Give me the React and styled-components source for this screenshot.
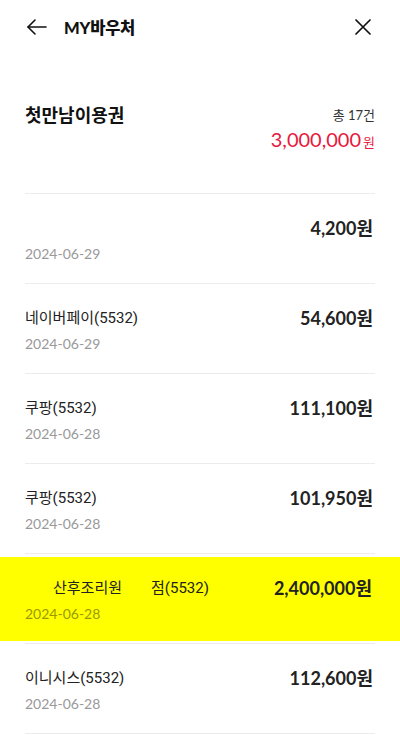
import React from "react";
import styled, { createGlobalStyle } from "styled-components";

const Global = createGlobalStyle`
  html, body { margin: 0; padding: 0; background: #fff; }
  body { font-family: Lato, "Noto Sans CJK KR", sans-serif; color: #222; }
  * { box-sizing: border-box; }
`;

const Page = styled.div`
  width: 400px;
  min-height: 751px;
  background: #fff;
  display: flex;
  flex-direction: column;
`;

const Header = styled.header`
  height: 54px;
  padding: 0 26px 0 26px;
  display: flex;
  align-items: center;
  gap: 16px;
`;

const IconButton = styled.button`
  border: 0;
  background: none;
  padding: 0;
  display: flex;
  align-items: center;
  justify-content: center;
  width: 22px;
  height: 22px;
  color: #111;
  margin-left: ${(p) => (p.$push ? "auto" : "0")};
`;

const Title = styled.h1`
  margin: 0;
  font-family: Lato, "Noto Sans CJK KR", sans-serif;
  font-size: 16.5px;
  font-weight: 900;
  color: #111;
  letter-spacing: -0.2px;
`;

const Summary = styled.section`
  padding: 46px 25px 0;
  height: 139px;
  display: flex;
  justify-content: space-between;
  align-items: flex-start;
`;

const VoucherName = styled.h2`
  margin: 0;
  font-family: "Noto Sans CJK KR", sans-serif;
  font-size: 18px;
  font-weight: 700;
  color: #111;
  line-height: 28px;
`;

const Totals = styled.div`
  display: flex;
  flex-direction: column;
  align-items: flex-end;
  padding-top: 7px;
  gap: 3px;
`;

const Count = styled.span`
  font-size: 13px;
  color: #333;
  line-height: 17px;
`;

const Total = styled.span`
  color: #e8193c;
  font-size: 20px;
  line-height: 24px;
  display: flex;
  align-items: baseline;
  gap: 2px;
`;

const Unit = styled.span`
  font-family: "Noto Sans CJK KR", sans-serif;
  font-size: 13px;
`;

const List = styled.div`
  display: flex;
  flex-direction: column;
`;

const Divider = styled.div`
  height: 1px;
  margin: 0 25px;
  background: #ececec;
`;

const Item = styled.div`
  padding: ${(p) => (p.$highlight ? "31px 28px 0 25px" : "34px 27px 0 25px")};
  margin: ${(p) => (p.$highlight ? "3px 0 2px" : "0")};
  height: ${(p) => (p.$highlight ? "84px" : "89px")};
  background: ${(p) => (p.$highlight ? "#ffff00" : "transparent")};
  display: grid;
  grid-template-columns: 1fr auto;
  grid-template-rows: 0 auto;
  column-gap: 12px;
`;

const Name = styled.div`
  grid-column: 1;
  align-self: center;
  font-family: Roboto, "Noto Sans CJK KR", sans-serif;
  font-size: 15px;
  color: #222;
  line-height: 20px;
  display: flex;
  gap: 29px;
  padding-left: ${(p) => (p.$indent ? "28px" : "0")};
  white-space: nowrap;
`;

const Amount = styled.div`
  grid-column: 2;
  grid-row: 1;
  align-self: center;
  font-size: 18px;
  font-weight: 700;
  color: #222;
  line-height: 22px;
`;

const DateText = styled.div`
  grid-column: 1;
  grid-row: 2;
  margin-top: 16px;
  font-size: 14px;
  line-height: 20px;
  color: ${(p) => (p.$highlight ? "#9a9a00" : "#999")};
`;

const rows = [
  { name: [], amount: "4,200원", date: "2024-06-29" },
  { name: ["네이버페이(5532)"], amount: "54,600원", date: "2024-06-29" },
  { name: ["쿠팡(5532)"], amount: "111,100원", date: "2024-06-28" },
  { name: ["쿠팡(5532)"], amount: "101,950원", date: "2024-06-28" },
  { name: ["산후조리원", "점(5532)"], amount: "2,400,000원", date: "2024-06-28", highlight: true },
  { name: ["이니시스(5532)"], amount: "112,600원", date: "2024-06-28" },
];

export default function App() {
  return (
    <Page>
      <Global />
      <Header>
        <IconButton aria-label="back">
          <svg width="22" height="22" viewBox="0 0 22 22" fill="none" stroke="#111" strokeWidth="1.6" strokeLinecap="round" strokeLinejoin="round">
            <path d="M2 11h18" />
            <path d="M9 4l-7 7 7 7" />
          </svg>
        </IconButton>
        <Title>MY바우처</Title>
        <IconButton $push aria-label="close">
          <svg width="20" height="20" viewBox="0 0 20 20" fill="none" stroke="#111" strokeWidth="1.7" strokeLinecap="round">
            <path d="M3 3l14 14M17 3L3 17" />
          </svg>
        </IconButton>
      </Header>
      <Summary>
        <VoucherName>첫만남이용권</VoucherName>
        <Totals>
          <Count>총 17건</Count>
          <Total>
            3,000,000<Unit>원</Unit>
          </Total>
        </Totals>
      </Summary>
      <List>
        {rows.map((r, i) => (
          <React.Fragment key={i}>
            <Divider />
            <Item $highlight={r.highlight}>
              <Name $indent={r.highlight}>
                {r.name.map((n, j) => (
                  <span key={j}>{n}</span>
                ))}
              </Name>
              <Amount>{r.amount}</Amount>
              <DateText $highlight={r.highlight}>{r.date}</DateText>
            </Item>
          </React.Fragment>
        ))}
        <Divider />
      </List>
    </Page>
  );
}
